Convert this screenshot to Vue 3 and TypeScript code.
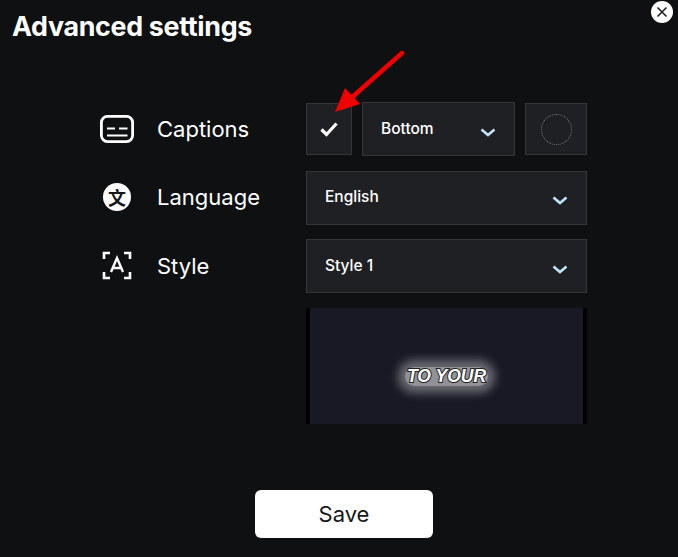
<script setup lang="ts">
const position = 'Bottom'
const language = 'English'
const style = 'Style 1'
</script>

<template>
  <div class="modal">
    <button class="close" aria-label="Close">
      <svg width="12" height="12" viewBox="0 0 12 12">
        <path d="M1.5 1.5l9 9M10.5 1.5l-9 9" stroke="#1a1a1a" stroke-width="1.5" fill="none" />
      </svg>
    </button>

    <h1 class="title">Advanced settings</h1>

    <div class="form">
      <div class="row">
        <div class="label">
          <svg class="icon" width="34" height="28" viewBox="0 0 34 28" fill="none" stroke="#fff">
            <rect x="1.4" y="1.4" width="31.2" height="25.2" rx="6" stroke-width="2.8" />
            <path d="M7 13.500h8M19 13.500h8.500M7 20.500h20.500" stroke-width="2" />
          </svg>
          <span>Captions</span>
        </div>
        <div class="controls">
          <div class="box check">
            <svg width="20" height="16" viewBox="0 0 20 16" fill="none">
              <path d="M2.500 8.500l5 5L17.500 2.500" stroke="#fff" stroke-width="3.200" />
            </svg>
          </div>
          <div class="box select position">
            <span>{{ position }}</span>
            <svg class="chevron" width="16" height="9" viewBox="0 0 16 9" fill="none">
              <path d="M1.500 1.500L8 7l6.500-5.500" stroke="#bfe3f8" stroke-width="2.600" />
            </svg>
          </div>
          <div class="box swatch">
            <span class="circle"></span>
          </div>
        </div>
      </div>

      <div class="row">
        <div class="label">
          <span class="icon lang-icon"><span class="lang-glyph">文</span></span>
          <span>Language</span>
        </div>
        <div class="box select wide">
          <span>{{ language }}</span>
          <svg class="chevron" width="16" height="9" viewBox="0 0 16 9" fill="none">
            <path d="M1.500 1.500L8 7l6.500-5.500" stroke="#bfe3f8" stroke-width="2.600" />
          </svg>
        </div>
      </div>

      <div class="row">
        <div class="label">
          <span class="icon style-icon">
            <svg width="30" height="29" viewBox="0 0 30 29" fill="none" stroke="#fff" stroke-width="2.600">
              <path d="M2 8V2h6M22 2h6v6M2 21v6h6M22 27h6v-6" />
              <path d="M9 21L15 7 21 21M11 17h8" stroke-width="2.400" />
            </svg>
          </span>
          <span>Style</span>
        </div>
        <div class="box select wide">
          <span>{{ style }}</span>
          <svg class="chevron" width="16" height="9" viewBox="0 0 16 9" fill="none">
            <path d="M1.500 1.500L8 7l6.500-5.500" stroke="#bfe3f8" stroke-width="2.600" />
          </svg>
        </div>
      </div>

      <div class="row preview-row">
        <div class="preview">
          <div class="preview-inner"><span class="preview-text">TO YOUR</span></div>
        </div>
      </div>
    </div>

    <div class="footer">
      <button class="save">Save</button>
    </div>

    <svg class="arrow" width="80" height="72" viewBox="0 0 80 72">
      <path d="M68 2L16 48" stroke="#f00000" stroke-width="4.500" stroke-linecap="round" fill="none" />
      <path d="M1 61L11 37L26 53Z" fill="#f00000" />
    </svg>
  </div>
</template>

<style>
html,
body {
  margin: 0;
  background: #0e1012;
}
</style>

<style scoped>
.modal {
  position: relative;
  width: 678px;
  height: 557px;
  box-sizing: border-box;
  padding-top: 10px;
  background: #0e1012;
  color: #fff;
  font-family: "Inter", "Liberation Sans", sans-serif;
  overflow: hidden;
}

.close {
  position: absolute;
  top: 1px;
  right: 5px;
  width: 22px;
  height: 22px;
  padding: 0;
  border: none;
  border-radius: 50%;
  background: #fff;
  display: flex;
  align-items: center;
  justify-content: center;
}

.title {
  margin: 0 0 0 12px;
  font-size: 26.800px;
  font-weight: 700;
  line-height: 32px;
  letter-spacing: -0.3px;
}

.form {
  margin-top: 60px;
  display: flex;
  flex-direction: column;
  gap: 14.500px;
  padding-left: 100px;
}

.row {
  display: flex;
  width: 487px;
  height: 54px;
}

.label {
  width: 206px;
  display: flex;
  align-items: center;
  font-size: 22px;
  margin-top: -1px;
}

.icon {
  width: 34px;
  margin-right: 23px;
  flex-shrink: 0;
}

.lang-icon {
  width: 28px;
  height: 28px;
  margin-left: 3px;
  margin-right: 26px;
  border-radius: 50%;
  background: #fff;
  display: flex;
  align-items: center;
  justify-content: center;
}

.lang-glyph {
  color: #15171a;
  font-family: "Noto Sans CJK SC", sans-serif;
  font-size: 18px;
  font-weight: 700;
  line-height: 1;
}

.style-icon {
  display: flex;
  width: 30px;
  margin-left: 2px;
  margin-right: 25px;
}

.controls {
  flex: 1;
  display: flex;
  align-items: center;
  gap: 10px;
}

.box {
  box-sizing: border-box;
  background: #1f2024;
  border: 1px solid #35363a;
  display: flex;
  align-items: center;
}

.check {
  width: 46px;
  height: 52px;
  justify-content: center;
}

.select {
  justify-content: space-between;
  font-size: 15.500px;
  font-weight: 500;
  padding: 0 18px;
}

.select > span {
  margin-top: -2px;
}

.select .chevron {
  margin-top: 6px;
}

.position {
  width: 153px;
  height: 54px;
}

.wide {
  flex: 1;
  height: 54px;
}

.swatch {
  width: 62px;
  height: 52px;
  justify-content: center;
}

.circle {
  width: 31px;
  height: 31px;
  box-sizing: border-box;
  border: 1px dotted #75767a;
  border-radius: 50%;
}

.preview-row {
  height: 116px;
  justify-content: flex-end;
}

.preview {
  width: 281px;
  height: 116px;
  box-sizing: border-box;
  padding: 0 4px;
  background: #000;
}

.preview-inner {
  height: 100%;
  box-sizing: border-box;
  padding-top: 21px;
  background: #191926;
  display: flex;
  align-items: center;
  justify-content: center;
}

.preview-text {
  padding: 0 2px;
  border-radius: 9px;
  line-height: 19px;
  background: rgba(225, 225, 225, 0.6);
  box-shadow: 0 0 10px 7px rgba(205, 205, 205, 0.45);
  font-family: "Liberation Sans", sans-serif;
  font-size: 17.500px;
  font-weight: 700;
  font-style: italic;
  color: #fff;
  -webkit-text-stroke: 2px #222;
  paint-order: stroke fill;
}

.footer {
  margin-top: 66px;
  padding-left: 10px;
  display: flex;
  justify-content: center;
}

.save {
  width: 178px;
  height: 48px;
  border: none;
  border-radius: 6px;
  background: #fff;
  color: #15171a;
  font-family: "Inter", "Liberation Sans", sans-serif;
  font-size: 22px;
}

.arrow {
  position: absolute;
  left: 334px;
  top: 51px;
}
</style>
